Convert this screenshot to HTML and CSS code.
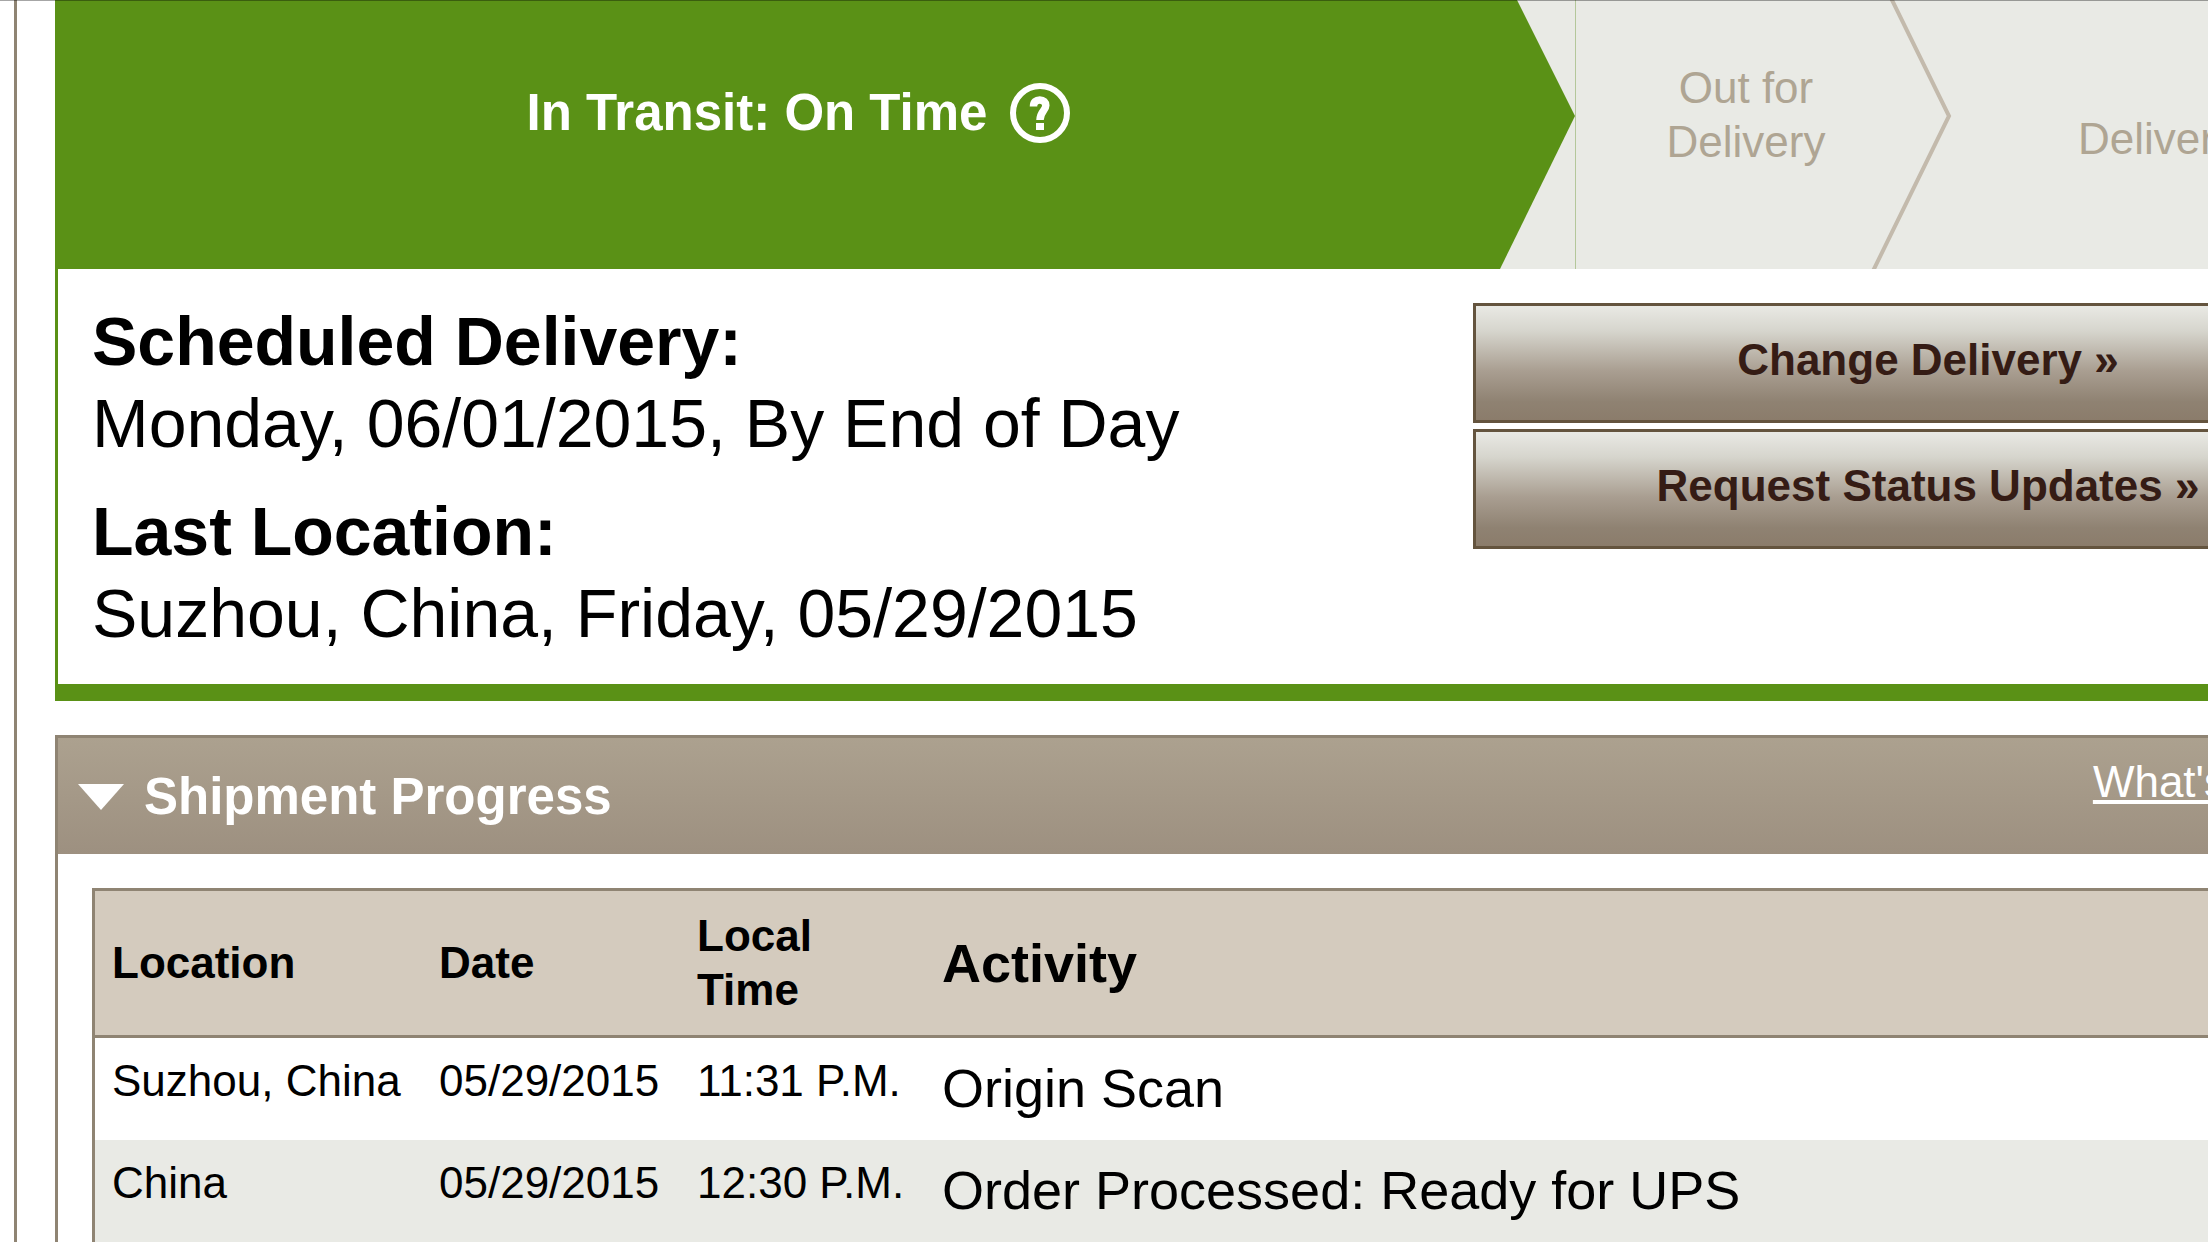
FILE: index.html
```html
<!DOCTYPE html>
<html lang="en">
<head>
  <meta charset="UTF-8" />
  <meta name="viewport" content="width=device-width, initial-scale=1.0" />
  <title>Tracking Detail</title>
  <link rel="stylesheet" href="styles.css">
</head>
<body>

  <main class="page">

    <!-- Status -->
    <section class="status">
      <div class="steps">
        <div class="step step-current">
          <div class="step-body">
            <span>In Transit: On Time</span>
            <button class="help" type="button" aria-label="Help">
              <svg width="62" height="62" viewBox="0 0 62 62">
                <circle cx="31" cy="31" r="27" fill="none" stroke="#fff" stroke-width="6" />
                <path d="M24.500 24.500c0-4.500 2.500-6.500 6.300-6.500s6 2.200 6 5.500c0 5-5.800 6-5.800 14.500" fill="none" stroke="#fff" stroke-width="7.500" />
                <rect x="27" y="41" width="8" height="7" fill="#fff" />
              </svg>
            </button>
          </div>
          <svg class="chevron" viewBox="0 0 75 269" preserveAspectRatio="none">
            <polygon points="0,0 17,0 75,116 0,269" fill="#5a9116" />
          </svg>
        </div>
        <div class="step step-out">
          <div class="step-body">Out for<br>Delivery</div>
          <svg class="chevron" viewBox="0 0 75 269" preserveAspectRatio="none">
            <polyline points="15,-2 73,116 -4,273" fill="none" stroke="#c3baac" stroke-width="4" />
          </svg>
        </div>
        <div class="step step-last">
          <div class="step-body">Delivered</div>
        </div>
      </div>

      <div class="summary">
        <dl class="details">
          <dt>Scheduled Delivery:</dt>
          <dd>Monday, 06/01/2015, By End of Day</dd>
          <dt>Last Location:</dt>
          <dd>Suzhou, China, Friday, 05/29/2015</dd>
        </dl>
        <div class="actions">
          <button class="btn" type="button">Change Delivery »</button>
          <button class="btn" type="button">Request Status Updates »</button>
        </div>
      </div>
    </section>

    <!-- Shipment progress -->
    <section class="panel">
      <header class="panel-header">
        <svg class="arrow" width="46" height="26" viewBox="0 0 46 26">
          <polygon points="0,0 46,0 23,26" fill="#fff" />
        </svg>
        <h2>Shipment Progress</h2>
        <a href="#">What's This?</a>
      </header>
      <div class="panel-body">
        <table class="progress">
          <thead>
            <tr>
              <th class="col-location">Location</th>
              <th class="col-date">Date</th>
              <th class="col-time">Local<br>Time</th>
              <th class="activity">Activity</th>
            </tr>
          </thead>
          <tbody>
            <tr>
              <td>Suzhou, China</td>
              <td>05/29/2015</td>
              <td>11:31 P.M.</td>
              <td class="activity">Origin Scan</td>
            </tr>
            <tr>
              <td>China</td>
              <td>05/29/2015</td>
              <td>12:30 P.M.</td>
              <td class="activity">Order Processed: Ready for UPS</td>
            </tr>
          </tbody>
        </table>
      </div>
    </section>

  </main>

</body>
</html>
```
FILE: styles.css
```css
:root {
  --green: #5a9116;
  --taupe: #8f8473;
  --light-gray: #e9eae5;
  --tan: #d4cbbe;
  --brown: #351c15;
}

* {
  margin: 0;
  padding: 0;
  box-sizing: border-box;
}

html {
  overflow: hidden;
}

body {
  position: relative;
  overflow: hidden;
  background: #fff;
  color: #000;
  font-family: "Liberation Sans", Arial, sans-serif;
  font-size: 44px;
  line-height: 54px;
}

/* hairline under the browser bar */
body::before {
  content: "";
  position: absolute;
  top: 0;
  left: 0;
  width: 100%;
  height: 1px;
  background: rgba(0, 0, 0, 0.35);
  z-index: 1;
}

/* the page is wider than the window and runs off to the right */
.page {
  margin: 0 -253px 0 14px;
  padding: 0 38px;
  border-left: 3px solid var(--taupe);
  border-right: 3px solid var(--taupe);
}

/* Status */
.status {
  border: 3px solid var(--green);
  border-top: none;
  border-bottom-width: 17px;
  margin-bottom: 34px;
}

.steps {
  display: flex;
  min-height: 269px;
  overflow: hidden;
  background: var(--light-gray);
  color: #afa593;
  text-align: center;
}

.step {
  display: flex;
}

.step-body {
  flex: 1;
  display: flex;
  align-items: center;
  justify-content: center;
  padding: 0 0 40px 40px;
}

.chevron {
  flex: none;
  width: 75px;
  height: 100%;
  overflow: visible;
}

.step-current {
  flex: 1;
  border-right: 1px solid #b4c79a;
}

.step-current .step-body {
  gap: 22px;
  padding-bottom: 43px;
  background: var(--green);
  color: #fff;
  font-size: 51px;
  font-weight: bold;
}

.step-out {
  flex: 0 0 375px;
}

.step-last {
  flex: 0 0 466px;
}

.step-last .step-body {
  padding: 8px 26px 0 0;
}

.help {
  display: flex;
  border: none;
  background: none;
  cursor: pointer;
}

.summary {
  display: flex;
  justify-content: space-between;
  align-items: flex-start;
  padding: 31px 34px 30px;
}

.details {
  font-size: 68px;
  line-height: 82px;
}

.details dt {
  font-weight: bold;
}

.details dd + dt {
  margin-top: 26px;
}

.actions {
  display: flex;
  flex-direction: column;
  gap: 6px;
  width: 910px;
  padding-top: 3px;
}

.btn {
  height: 120px;
  padding-bottom: 6px;
  border: 3px solid #64543e;
  background: linear-gradient(#e9e9e4, #d6d5cd 22%, #a99e91 57%, #8f8272 84%, #8b7c6b);
  color: var(--brown);
  font-family: inherit;
  font-size: 44px;
  font-weight: bold;
  cursor: pointer;
}

/* Shipment progress */
.panel {
  border: 3px solid var(--taupe);
  border-bottom: none;
}

.panel-header {
  display: flex;
  align-items: center;
  min-height: 116px;
  padding: 2px 72px 0 20px;
  background: linear-gradient(#aca18f, #9d9080);
  color: #fff;
}

.panel-header h2 {
  flex: 1;
  padding-left: 20px;
  font-size: 51px;
}

.panel-header a {
  align-self: flex-start;
  padding-top: 15px;
  color: #fff;
}

.panel-body {
  padding: 34px 34px 0;
}

.progress {
  width: 100%;
  border: 3px solid var(--taupe);
  border-bottom: none;
  border-spacing: 0;
  text-align: left;
}

.progress th {
  padding: 18px 0 18px 17px;
  background: var(--tan);
  border-bottom: 3px solid var(--taupe);
}

.progress td {
  padding: 16px 0 18px 17px;
  vertical-align: top;
  white-space: nowrap;
}

.progress tbody tr:nth-child(even) {
  background: var(--light-gray);
}

.progress .activity {
  font-size: 54px;
  line-height: 68px;
}

.col-location {
  width: 327px;
}

.col-date {
  width: 258px;
}

.col-time {
  width: 245px;
}
```
